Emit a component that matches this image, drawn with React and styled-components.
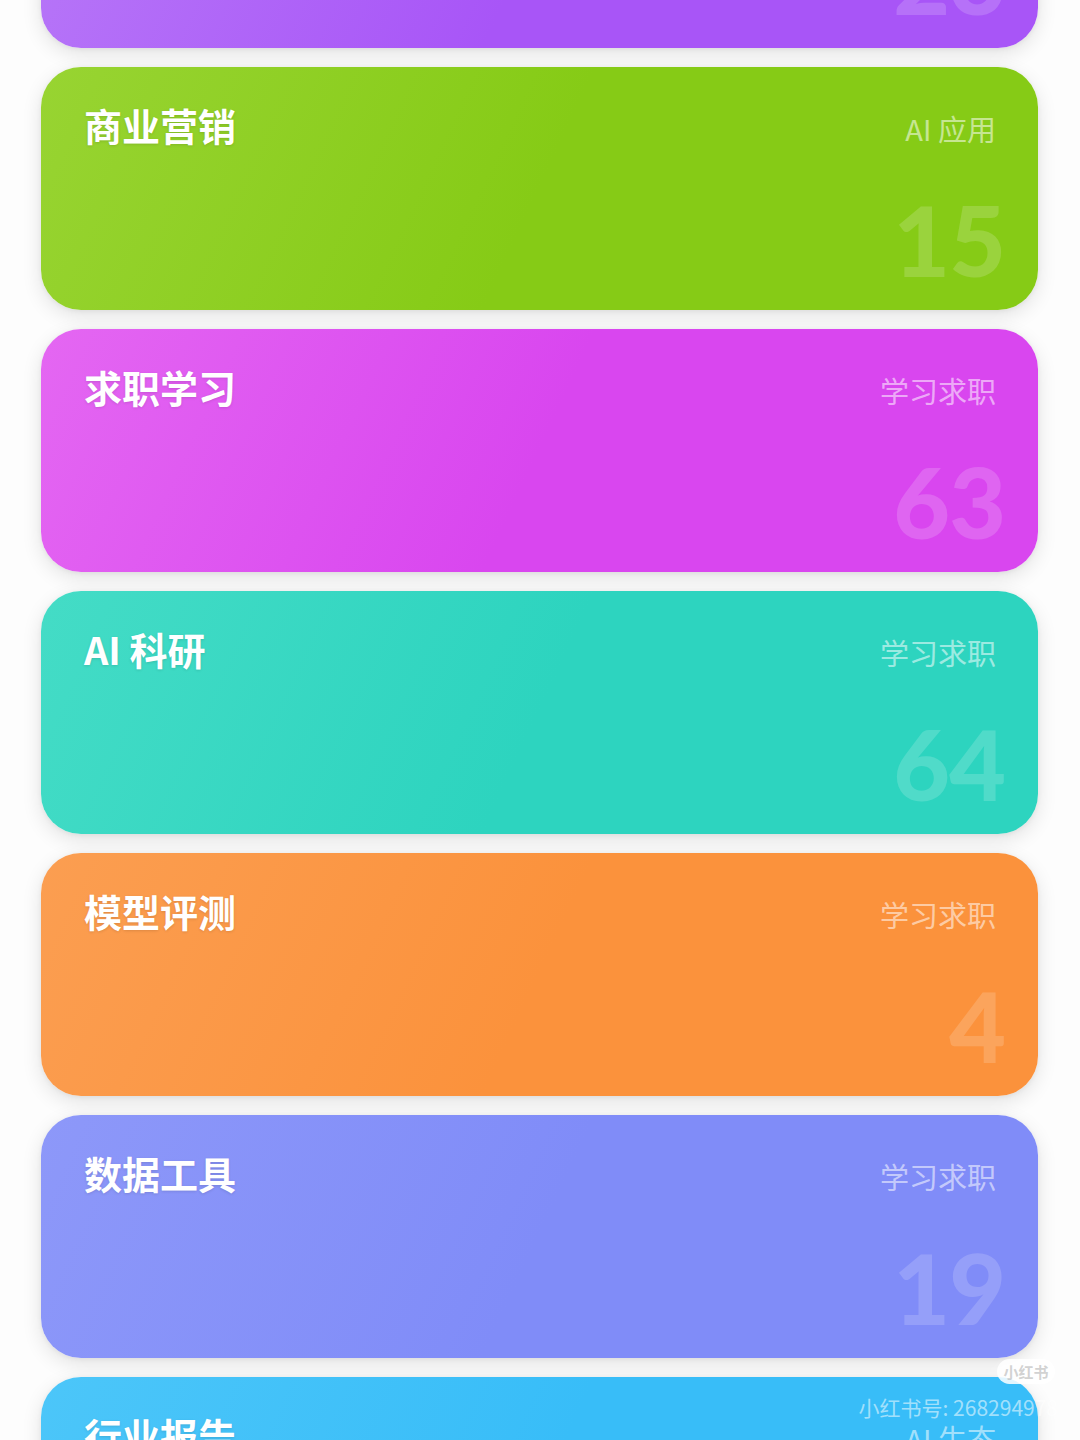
import React from "react";
import styled, { createGlobalStyle } from "styled-components";

const Global = createGlobalStyle`
  html, body { margin: 0; padding: 0; background: #ffffff; }
  body { font-family: "Noto Sans CJK SC", "Noto Sans", sans-serif; overflow: hidden; }
`;

const Page = styled.div`
  position: relative;
  width: 1080px;
  height: 1440px;
  overflow: hidden;
  background: #fdfdfd;
`;

const List = styled.div`
  display: flex;
  flex-direction: column;
  gap: 19px;
  padding: 0 42px 0 41px;
  margin-top: -195px;
`;

const Card = styled.div`
  height: 243px;
  box-sizing: border-box;
  border-radius: 40px;
  padding: 31px 42px 22px 43px;
  display: flex;
  flex-direction: column;
  background: linear-gradient(115deg, ${(p) => p.$light} 0%, ${(p) => p.$base} 50%, ${(p) => p.$base} 100%);
  box-shadow: 0 6px 20px rgba(0, 0, 0, 0.11), 0 1px 5px rgba(0, 0, 0, 0.06);
`;

const Header = styled.div`
  display: flex;
  justify-content: space-between;
  align-items: center;
`;

const Title = styled.div`
  color: #ffffff;
  font-size: 38px;
  font-weight: 700;
  line-height: 45px;
  text-shadow: 0 1px 3px rgba(0, 0, 0, 0.12);
`;

const Tag = styled.div`
  color: rgba(255, 255, 255, 0.55);
  font-size: 29px;
  font-weight: 400;
  line-height: 45px;
  margin-top: 8px;
`;

const Count = styled.div`
  margin-top: auto;
  align-self: flex-end;
  margin-right: -9px;
  font-family: "Lato", "Open Sans", sans-serif;
  font-weight: 900;
  font-size: 98px;
  line-height: 1;
  color: rgba(255, 255, 255, 0.17);
  letter-spacing: -1px;
`;

const Watermark = styled.div`
  position: absolute;
  right: 22px;
  bottom: 20px;
  display: flex;
  flex-direction: column;
  align-items: flex-end;
  gap: 10px;
  pointer-events: none;
`;

const Logo = styled.div`
  width: 58px;
  height: 25px;
  border-radius: 13px;
  background: rgba(255, 255, 255, 0.85);
  color: rgba(180, 180, 180, 0.6);
  font-size: 15px;
  font-weight: 700;
  display: flex;
  align-items: center;
  justify-content: center;
  margin-right: 3px;
`;

const MarkText = styled.div`
  color: rgba(255, 255, 255, 0.55);
  font-size: 21px;
  line-height: 26px;
`;

const cards = [
  { title: "内容创作", tag: "AI 应用", count: "23", light: "#b879f8", base: "#a855f7" },
  { title: "商业营销", tag: "AI 应用", count: "15", light: "#98d432", base: "#86cb16" },
  { title: "求职学习", tag: "学习求职", count: "63", light: "#e467f2", base: "#d946ef" },
  { title: "AI 科研", tag: "学习求职", count: "64", light: "#44dcc6", base: "#2dd4bf" },
  { title: "模型评测", tag: "学习求职", count: "4", light: "#fb9e51", base: "#fb923c" },
  { title: "数据工具", tag: "学习求职", count: "19", light: "#8d98f9", base: "#808cf8" },
  { title: "行业报告", tag: "AI 生态", count: "31", light: "#4cc6f9", base: "#38bdf8" },
];

export default function App() {
  return (
    <Page>
      <Global />
      <List>
        {cards.map((c) => (
          <Card key={c.title} $light={c.light} $base={c.base}>
            <Header>
              <Title>{c.title}</Title>
              <Tag>{c.tag}</Tag>
            </Header>
            <Count>{c.count}</Count>
          </Card>
        ))}
      </List>
      <Watermark>
        <Logo>小红书</Logo>
        <MarkText>小红书号: 268294978</MarkText>
      </Watermark>
    </Page>
  );
}
